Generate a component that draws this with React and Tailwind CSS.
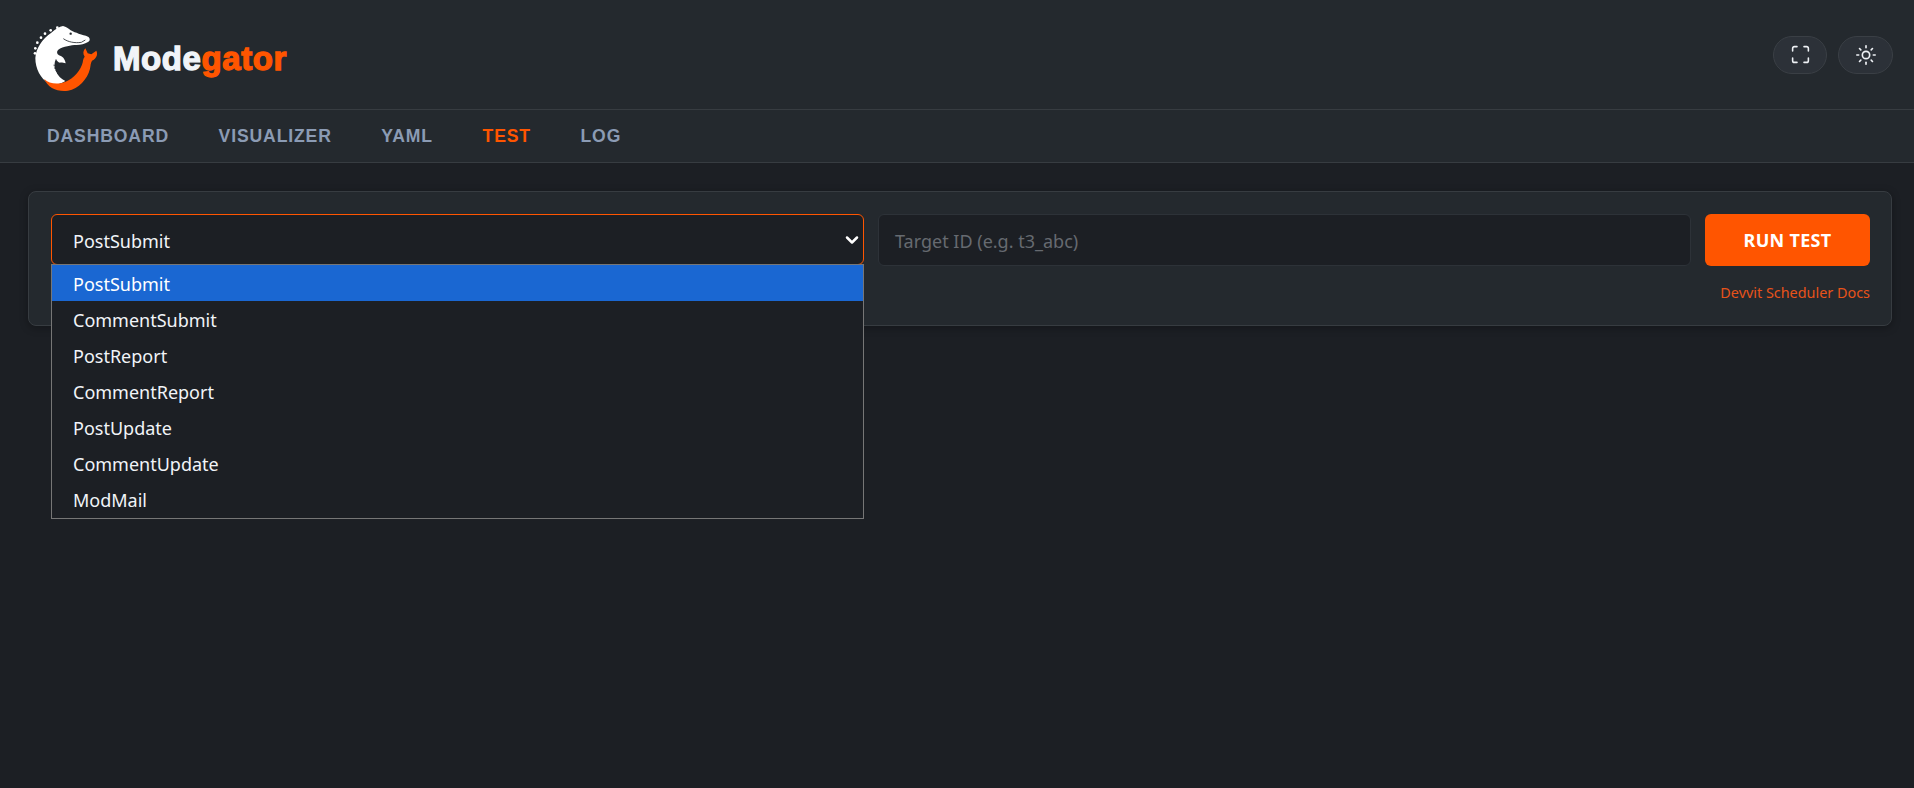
import React from "react";
import { Maximize, Sun, ChevronDown } from "lucide-react";

const tabs = ["DASHBOARD", "VISUALIZER", "YAML", "TEST", "LOG"];
const options = [
  "PostSubmit",
  "CommentSubmit",
  "PostReport",
  "CommentReport",
  "PostUpdate",
  "CommentUpdate",
  "ModMail",
];

const GatorLogo = () => (
  <svg viewBox="0 0 228 228" className="w-[76px] h-[76px] shrink-0">
    <g fill="#ffffff">
      <circle cx="21" cy="100" r="4" />
      <circle cx="22" cy="85" r="4" />
      <circle cx="28" cy="68" r="4" />
      <circle cx="39" cy="53" r="4" />
      <circle cx="51" cy="41" r="4" />
      <circle cx="68" cy="31" r="4" />
      <circle cx="88" cy="23" r="4" />
      <path d="M105 18 C114 20 122 25 128 31 C136 36 144 38 152 41 C162 44 172 46 180 50 C187 54 187 62 180 66 C170 72 158 75 146 75 C136 75 128 76 118 79 C108 81 98 84 90 90 C85 96 87 103 93 106 C103 109 111 116 113 130 C107 130 102 127 96 128 C90 126 86 122 84 116 C78 128 78 142 84 154 C90 168 100 178 112 183 C96 194 78 196 62 190 C38 176 22 146 22 114 C24 84 42 58 70 38 C82 28 94 20 105 18 Z" />
    </g>
    <path d="M106 56 C120 66 140 70 160 67 M160 67 L172 60" fill="none" stroke="#24292e" strokeWidth="2.5" />
    <circle cx="128" cy="41" r="3.5" fill="#24292e" />
    <path d="M78 134 C80 148 88 162 102 174" fill="none" stroke="#24292e" strokeWidth="2.5" strokeDasharray="5 4" />
    <path
      fill="#ff5500"
      d="M48 176 C62 190 84 194 104 188 C128 182 152 160 162 134 C166 124 164 116 170 110 C164 102 165 92 172 85 L179 100 L190 103 L205 92 C211 104 204 116 192 122 C188 128 188 136 186 146 C178 178 152 206 120 212 C88 216 60 204 48 176 Z"
    />
  </svg>
);

export default function App() {
  return (
    <div className="min-h-screen bg-[#1c1f24] font-['Noto_Sans',sans-serif]">
      <header className="h-[110px] bg-[#24292e] border-b border-[#373c41] flex items-center justify-between pl-[28px] pr-[21px]">
        <div className="flex items-center gap-[9px] pt-[7px]">
          <GatorLogo />
          <h1 className="font-['Liberation_Sans',sans-serif] font-bold text-[33px] leading-none [-webkit-text-stroke:1.3px_currentColor] text-[#f1f4f8] tracking-[0.6px]">
            Mode<span className="text-[#ff5500]">gator</span>
          </h1>
        </div>
        <div className="flex items-center gap-[11px]">
          <button className="w-[54px] h-[38px] rounded-full bg-[#2c3138] border border-[#3a3f45] flex items-center justify-center text-[#eef1f5]">
            <Maximize size={21} strokeWidth={1.8} />
          </button>
          <button className="w-[55px] h-[38px] rounded-full bg-[#2c3138] border border-[#3a3f45] flex items-center justify-center text-[#eef1f5]">
            <Sun size={22} strokeWidth={1.8} />
          </button>
        </div>
      </header>

      <nav className="h-[53px] bg-[#24292e] border-b border-[#373c41] flex items-center gap-[49.6px] pl-[47px] font-['Liberation_Sans',sans-serif] font-bold text-[17.6px] tracking-[0.85px]">
        {tabs.map((tab) => (
          <span key={tab} className={tab === "TEST" ? "text-[#ff5500]" : "text-[#8b9bb4]"}>
            {tab}
          </span>
        ))}
      </nav>

      <main className="pt-[28px] px-[28px] pr-[22px]">
        <section className="h-[135px] bg-[#24292e] border border-[#373c41] rounded-lg shadow-[0_2px_8px_rgba(0,0,0,0.3)] pt-[22px] pl-[22px] pr-[21px]">
          <div className="flex gap-[14px]">
            <div className="relative w-[813px]">
              <div className="h-[51px] bg-[#1c1f24] border border-[#ff5500] rounded-md flex items-center justify-between pl-[21px] pr-[1px] text-[#f1f4f8] text-[18px]">
                <span className="pt-[4px]">PostSubmit</span>
                <ChevronDown size={20} strokeWidth={3} className="text-white" />
              </div>
              <ul className="absolute left-0 top-[50px] w-full bg-[#1c1f24] border border-[#767676] pb-[1px] text-[#f1f4f8] text-[18px]">
                {options.map((option, i) => (
                  <li
                    key={option}
                    className={`h-[36px] flex items-center pl-[21px] pt-[3px] ${i === 0 ? "bg-[#1a67d2] text-white" : ""}`}
                  >
                    {option}
                  </li>
                ))}
              </ul>
            </div>
            <div className="flex-1 h-[52px] bg-[#1c1f24] border border-[#2d3238] rounded-md flex items-center px-[16px] pt-[2px] text-[#666a70] text-[18px]">
              Target ID (e.g. t3_abc)
            </div>
            <button className="w-[165px] h-[52px] bg-[#ff5500] rounded-md text-white font-bold text-[18px] tracking-[0.3px]">
              RUN TEST
            </button>
          </div>
          <div className="mt-[18px] text-right text-[14.4px] leading-[18px] text-[#e8531a]">
            Devvit Scheduler Docs
          </div>
        </section>
      </main>
    </div>
  );
}
